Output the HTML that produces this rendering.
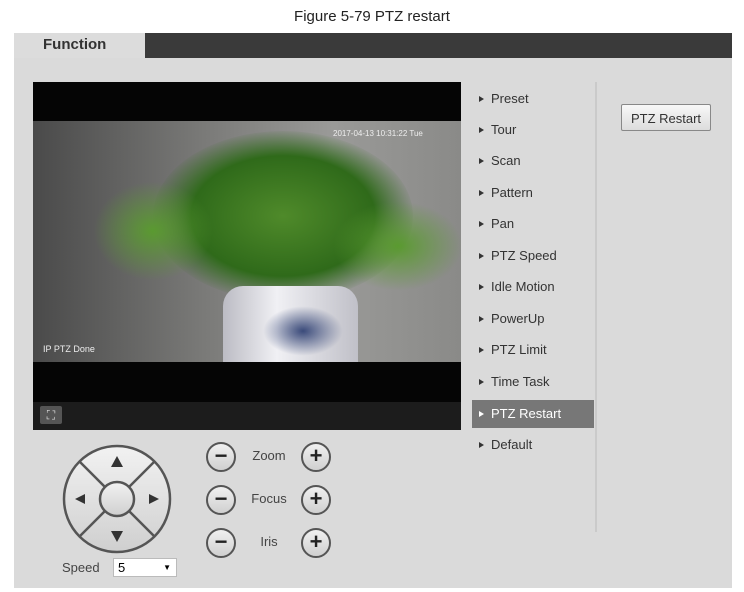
<!DOCTYPE html>
<html><head><style>
body{margin:0;width:744px;height:592px;background:#fff;position:relative;overflow:hidden;font-family:"Liberation Sans",sans-serif;}
.a{position:absolute}
.cap{left:0;width:744px;top:8px;text-align:center;font-size:15px;color:#222}
.panel{left:14px;top:33px;width:718px;height:555px;background:#dadada}
.bar{left:145px;top:33px;width:587px;height:25px;background:#3a3a3a}
.tab{left:14px;top:33px;width:131px;height:25px;background:#dcdcdc;font-weight:bold;font-size:15px;color:#333;line-height:24px;text-indent:29px}
.mi{left:472px;width:122px;height:28px;font-size:13px;color:#333;line-height:28px}
.mi:before{content:"";display:inline-block;border-left:5px solid #333;border-top:3.5px solid transparent;border-bottom:3.5px solid transparent;margin:0 7px 1px 7px}
.sel{background:#777;color:#fff}
.sel:before{border-left-color:#fff}
.btn{left:621px;top:104px;width:90px;height:27px;border:1px solid #888;border-radius:2px;background:linear-gradient(#f8f8f8,#dcdcdc);font-size:13px;color:#333;text-align:center;line-height:27px;box-sizing:border-box}
.c{width:30px;height:30px;border:2px solid #555;border-radius:50%;background:linear-gradient(#f0f0f0,#d0d0d0);box-sizing:border-box;text-align:center;line-height:24px;font-size:22px;color:#222;font-weight:bold}
.lb{font-size:13px;color:#444;width:60px;text-align:center}
</style></head><body>
<div class="a cap">Figure 5-79 PTZ restart</div>
<div class="a panel"></div>
<div class="a bar"></div>
<div class="a tab">Function</div>
<div class="a" style="left:33px;top:82px;width:428px;height:348px;background:#050505"></div>
<div class="a" style="left:33px;top:121px;width:428px;height:241px;overflow:hidden;background:linear-gradient(90deg,#4a4a4a,#7a7a78 40%,#9a9a98 70%,#8a8a88)">
 <div class="a" style="left:120px;top:10px;width:260px;height:170px;border-radius:50%;background:radial-gradient(ellipse,#4f8a2a,#2f6a1a 50%,rgba(60,100,40,0) 72%)"></div>
 <div class="a" style="left:60px;top:60px;width:120px;height:100px;border-radius:50%;background:radial-gradient(ellipse,#5a9a30,rgba(60,100,40,0) 70%)"></div>
 <div class="a" style="left:300px;top:80px;width:130px;height:90px;border-radius:50%;background:radial-gradient(ellipse,#5a9a30,rgba(60,100,40,0) 70%)"></div>
 <div class="a" style="left:190px;top:165px;width:135px;height:90px;border-radius:20px 20px 0 0;background:linear-gradient(90deg,#bcbcc4,#f0f0f4 40%,#c0c0c8)"></div>
 <div class="a" style="left:230px;top:185px;width:80px;height:50px;border-radius:40%;background:radial-gradient(#3a4a7a,rgba(60,70,120,0) 70%)"></div>
 <div class="a" style="left:300px;top:8px;color:#eee;font-size:8px">2017-04-13 10:31:22 Tue</div>
 <div class="a" style="left:10px;top:223px;color:#eee;font-size:9px">IP PTZ Done</div>
</div>
<div class="a" style="left:33px;top:402px;width:428px;height:28px;background:#1c1c1c"></div>
<div class="a" style="left:40px;top:406px;width:22px;height:18px;background:#555;border-radius:2px;color:#ddd;font-size:12px;text-align:center;line-height:18px">⛶</div>
<svg class="a" style="left:60px;top:442px" width="114" height="114" viewBox="0 0 114 114">
<defs><linearGradient id="g" x1="0" y1="0" x2="0" y2="1"><stop offset="0" stop-color="#f2f2f2"/><stop offset="1" stop-color="#cfcfcf"/></linearGradient></defs>
<circle cx="57" cy="57" r="53" fill="url(#g)" stroke="#555" stroke-width="2.5"/>
<line x1="20" y1="20" x2="94" y2="94" stroke="#555" stroke-width="2.5"/>
<line x1="94" y1="20" x2="20" y2="94" stroke="#555" stroke-width="2.5"/>
<circle cx="57" cy="57" r="17" fill="url(#g)" stroke="#555" stroke-width="2.5"/>
<polygon points="57,14 51,25 63,25" fill="#333"/>
<polygon points="57,100 51,89 63,89" fill="#333"/>
<polygon points="15,52 15,62 25,57" fill="#333" transform="rotate(180 20 57)"/>
<polygon points="89,52 89,62 99,57" fill="#333"/>
</svg>
<div class="a" style="left:62px;top:560px;font-size:13px;color:#444">Speed</div>
<div class="a" style="left:113px;top:558px;width:64px;height:19px;background:#fff;border:1px solid #bbb;box-sizing:border-box;font-size:13px;line-height:17px;padding-left:4px">5<span style="position:absolute;right:5px;font-size:8px">▼</span></div>
<div class="a c" style="left:206px;top:442px">−</div><div class="a lb" style="left:239px;top:448px">Zoom</div><div class="a c" style="left:301px;top:442px">+</div>
<div class="a c" style="left:206px;top:485px">−</div><div class="a lb" style="left:239px;top:491px">Focus</div><div class="a c" style="left:301px;top:485px">+</div>
<div class="a c" style="left:206px;top:528px">−</div><div class="a lb" style="left:239px;top:534px">Iris</div><div class="a c" style="left:301px;top:528px">+</div>
<div class="a mi" style="top:85px">Preset</div>
<div class="a mi" style="top:116px">Tour</div>
<div class="a mi" style="top:147px">Scan</div>
<div class="a mi" style="top:179px">Pattern</div>
<div class="a mi" style="top:210px">Pan</div>
<div class="a mi" style="top:242px">PTZ Speed</div>
<div class="a mi" style="top:273px">Idle Motion</div>
<div class="a mi" style="top:305px">PowerUp</div>
<div class="a mi" style="top:336px">PTZ Limit</div>
<div class="a mi" style="top:368px">Time Task</div>
<div class="a mi sel" style="top:400px">PTZ Restart</div>
<div class="a mi" style="top:431px">Default</div>
<div class="a" style="left:595px;top:82px;width:2px;height:450px;background:#cacaca"></div>
<div class="a btn">PTZ Restart</div>
</body></html>
